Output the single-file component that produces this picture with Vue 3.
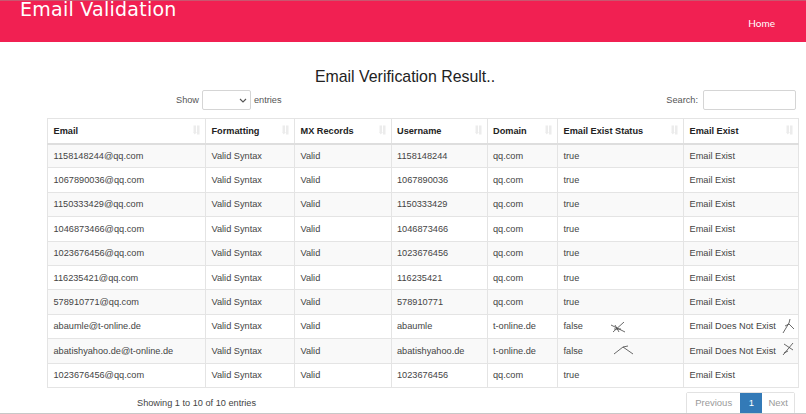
<script setup>
const cols = [158, 89, 96.5, 96, 70.5, 126, 114.5]
const heads = ['Email', 'Formatting', 'MX Records', 'Username', 'Domain', 'Email Exist Status', 'Email Exist']
const rows = [
  ['1158148244@qq.com', '1158148244', 'qq.com', 'true'],
  ['1067890036@qq.com', '1067890036', 'qq.com', 'true'],
  ['1150333429@qq.com', '1150333429', 'qq.com', 'true'],
  ['1046873466@qq.com', '1046873466', 'qq.com', 'true'],
  ['1023676456@qq.com', '1023676456', 'qq.com', 'true'],
  ['116235421@qq.com', '116235421', 'qq.com', 'true'],
  ['578910771@qq.com', '578910771', 'qq.com', 'true'],
  ['abaumle@t-online.de', 'abaumle', 't-online.de', 'false', 'M0 3 L14 10 M2 10 L13 0 M4 3 L8 10 M3 7 L10 7', 'M1 14 L7 4 L8 0 M7 5 L12 10 M3 7 L7 5'],
  ['abatishyahoo.de@t-online.de', 'abatishyahoo.de', 't-online.de', 'false', 'M0 9 L9 2 L19 9 M9 2 L14 1', 'M1 12 L11 0 M2 1 L11 7 M2 10 L6 8'],
  ['1023676456@qq.com', '1023676456', 'qq.com', 'true'],
]
</script>

<template>
  <div class="page">
    <header class="bar">
      <h1 class="brand">Email Validation</h1>
      <a class="home">Home</a>
    </header>
    <main class="content">
      <h2 class="title">Email Verification Result..</h2>
      <div class="controls">
        <label class="show">
          Show
          <span class="select"><svg width="8" height="5" viewBox="0 0 8 5"><path d="M1 1 L4 4 L7 1" fill="none" stroke="#555" stroke-width="1.1" /></svg></span>
          entries
        </label>
        <label class="search">Search: <span class="input"></span></label>
      </div>
      <table class="grid">
        <colgroup>
          <col v-for="(w, i) in cols" :key="i" :style="{ width: w + 'px' }" />
        </colgroup>
        <thead>
          <tr>
            <th v-for="h in heads" :key="h">
              {{ h }}
              <svg class="sort" width="7" height="10" viewBox="0 0 7 10"><path d="M0.5 0.5 H3 V7 H4 L1.7 9.5 L0 7 H0.5 Z M4 0.5 H6.5 V9.5 H4 Z" fill="#ececec" /></svg>
            </th>
          </tr>
        </thead>
        <tbody>
          <tr v-for="(r, i) in rows" :key="i">
            <td>{{ r[0] }}</td>
            <td>Valid Syntax</td>
            <td>Valid</td>
            <td>{{ r[1] }}</td>
            <td>{{ r[2] }}</td>
            <td class="mark-cell">
              {{ r[3] }}
              <svg v-if="r[4]" class="mark" :class="{ shifted: i === 8 }" width="20" height="15" viewBox="0 0 20 15"><path :d="r[4]" fill="none" stroke="#444" stroke-width="0.8" /></svg>
            </td>
            <td class="mark-cell">
              {{ r[3] === 'true' ? 'Email Exist' : 'Email Does Not Exist' }}
              <svg v-if="r[5]" class="mark-end" width="14" height="15" viewBox="0 0 14 15"><path :d="r[5]" fill="none" stroke="#444" stroke-width="0.8" /></svg>
            </td>
          </tr>
        </tbody>
      </table>
      <div class="foot">
        <span class="info">Showing 1 to 10 of 10 entries</span>
        <nav class="pager">
          <span class="pg">Previous</span>
          <span class="pg current">1</span>
          <span class="pg next">Next</span>
        </nav>
      </div>
    </main>
  </div>
</template>

<style>
html, body { margin: 0; background: #fff; }
</style>

<style scoped>
.page {
  position: relative;
  width: 806px;
  height: 414px;
  overflow: hidden;
  box-sizing: border-box;
  border-bottom: 1px solid #c8c8c8;
  background: #fff;
  font-family: "Liberation Sans", Arial, sans-serif;
  font-size: 9.2px;
  color: #333;
}
.bar {
  height: 42px;
  box-sizing: border-box;
  border-top: 1px solid #c9566f;
  background: #f12052;
  display: flex;
  justify-content: space-between;
  overflow: hidden;
  color: #fff;
}
.brand {
  margin: -5px 0 0 20px;
  font-family: "DejaVu Sans", sans-serif;
  font-size: 19px;
  line-height: 26px;
  font-weight: 400;
  letter-spacing: 0.25px;
}
.home {
  margin: 15px 31px 0 0;
  font-family: Lato, sans-serif;
  font-size: 10px;
  line-height: 14px;
}
.content {
  padding: 25px 9px 0 47px;
}
.title {
  margin: 0;
  padding-right: 34px;
  text-align: center;
  font-size: 15.9px;
  line-height: 20px;
  font-weight: 400;
  color: #222;
}
.controls {
  display: flex;
  justify-content: space-between;
  align-items: center;
  height: 20px;
  margin-top: 3px;
  padding: 0 1px 0 129px;
  color: #555;
}
.show, .search {
  display: flex;
  align-items: center;
  gap: 3px;
}
.search { gap: 5px; }
.select, .input {
  display: block;
  box-sizing: border-box;
  height: 20px;
  background: #fff;
  border: 1px solid #d5d5d5;
  border-radius: 2px;
}
.select {
  width: 49px;
  display: flex;
  align-items: center;
  justify-content: flex-end;
  padding-right: 3px;
}
.input { width: 93px; }
.grid {
  margin-top: 8px;
  width: 751px;
  table-layout: fixed;
  border-collapse: collapse;
  border: 1px solid #e4e4e4;
}
th, td {
  border: 1px solid #e4e4e4;
  padding: 0 5.5px;
  text-align: left;
  white-space: nowrap;
  overflow: hidden;
}
th {
  position: relative;
  height: 25px;
  box-sizing: border-box;
  border-bottom: 2px solid #dedede;
  font-weight: 700;
  color: #222;
}
td {
  height: 24.4px;
  box-sizing: border-box;
  color: #444;
}
tbody tr:nth-child(odd) td { background: #f9f9f9; }
.sort {
  position: absolute;
  right: 5px;
  top: 6px;
}
.mark-cell { position: relative; }
.mark {
  position: absolute;
  left: 53px;
  top: 7px;
}
.mark.shifted { left: 56px; top: 6px; }
.mark-end {
  position: absolute;
  right: 2px;
  top: 4px;
}
.foot {
  display: flex;
  justify-content: space-between;
  align-items: flex-start;
  margin-top: 4px;
  padding-left: 90px;
}
.info {
  margin-top: 5px;
  line-height: 13px;
  color: #444;
}
.pager {
  display: flex;
  height: 22px;
  margin-right: 2px;
  box-sizing: border-box;
  border: 1px solid #e2e2e2;
  border-radius: 2px;
  font-size: 9.5px;
}
.pg {
  display: flex;
  align-items: center;
  padding: 0 8px;
  color: #9a9a9a;
  background: #fff;
}
.next { padding: 0 6px; }
.current {
  padding: 0 8.5px;
  background: #337ab7;
  color: #fff;
}
</style>
